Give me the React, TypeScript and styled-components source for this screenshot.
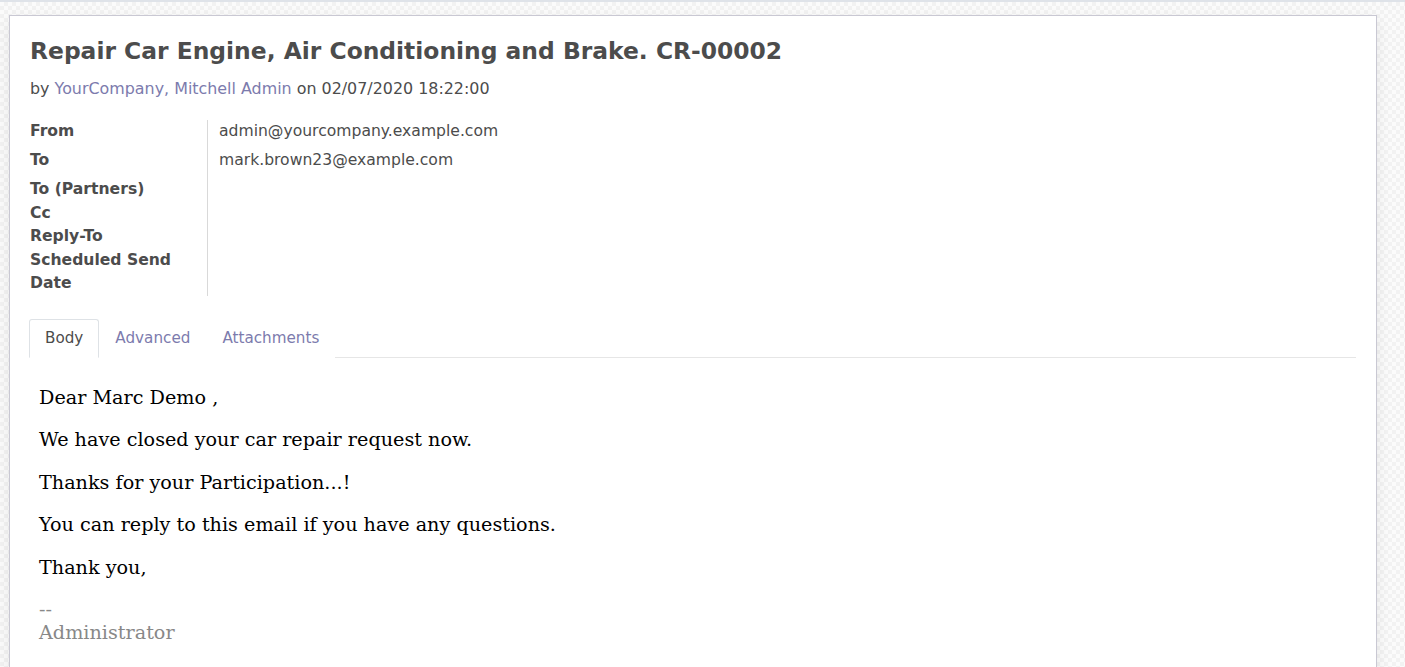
import { createGlobalStyle, styled } from 'styled-components';

const GlobalStyle = createGlobalStyle`
  html, body {
    margin: 0;
    padding: 0;
  }
  body {
    font-family: "DejaVu Sans", Verdana, sans-serif;
    color: #4c4c4c;
    overflow: hidden;
  }
`;

export const Page = styled.div`
  min-height: 667px;
  border-top: 2px solid #dfe3e9;
  background-color: #f7f7f7;
  background-image: repeating-conic-gradient(#f2f2f2 0% 25%, #fbfbfb 0% 50%);
  background-size: 8px 8px;
  padding: 13px 28px 0 9px;
`;

export const Sheet = styled.div`
  background: #ffffff;
  border: 1px solid #c9c8d3;
  box-shadow: 0 5px 14px rgba(0, 0, 0, 0.08);
  padding: 22px 20px 30px 20px;
  min-height: 700px;
`;

export const Title = styled.h1`
  margin: 0;
  font-size: 23.4px;
  line-height: 26px;
  font-weight: 700;
  color: #4c4c4c;
`;

export const Byline = styled.div`
  margin-top: 15px;
  font-size: 15.9px;
  line-height: 20px;
`;

export const Link = styled.a`
  color: #7c7bad;
  text-decoration: none;
`;

export const Fields = styled.div`
  display: grid;
  grid-template-columns: 178px 1fr;
  margin-top: 21px;
`;

export const Label = styled.div<{ $tall?: boolean }>`
  border-right: 1px solid #d9d9d9;
  font-size: 15.6px;
  font-weight: 700;
  line-height: 23.5px;
  min-height: ${(p) => (p.$tall ? '29px' : '0')};
`;

export const Value = styled.div`
  padding-left: 11px;
  font-size: 15.6px;
  line-height: 23.5px;
`;

export const TabBar = styled.div`
  display: flex;
  margin: 23px 0 0 -1px;
  border-bottom: 1px solid #e6e6e6;
`;

export const Tab = styled.div<{ $active?: boolean }>`
  box-sizing: border-box;
  padding: 0 15px;
  height: 39px;
  display: flex;
  align-items: center;
  font-size: 15.2px;
  margin-bottom: -1px;
  color: ${(p) => (p.$active ? '#4c4c4c' : '#7c7bad')};
  background: #ffffff;
  border: 1px solid ${(p) => (p.$active ? '#dee2e6' : 'transparent')};
  border-bottom-color: ${(p) => (p.$active ? '#ffffff' : 'transparent')};
  border-radius: 3px 3px 0 0;
`;

export const Mail = styled.div`
  padding: 28px 9px 0 9px;
  font-family: "DejaVu Serif", "Liberation Serif", serif;
  font-size: 19.2px;
  color: #000000;
`;

export const Para = styled.p`
  margin: 0 0 19.5px 0;
  line-height: 23px;
`;

export const Signature = styled.div`
  color: #888888;
  line-height: 23px;
`;

const fields: { label: string; value?: string; tall?: boolean }[] = [
  { label: 'From', value: 'admin@yourcompany.example.com', tall: true },
  { label: 'To', value: 'mark.brown23@example.com', tall: true },
  { label: 'To (Partners)' },
  { label: 'Cc' },
  { label: 'Reply-To' },
  { label: 'Scheduled Send Date' },
];

export default function App() {
  return (
    <Page>
      <GlobalStyle />
      <Sheet>
        <Title>Repair Car Engine, Air Conditioning and Brake. CR-00002</Title>
        <Byline>
          by <Link>YourCompany, Mitchell Admin</Link> on 02/07/2020 18:22:00
        </Byline>
        <Fields>
          {fields.map((f) => (
            <>
              <Label key={f.label} $tall={f.tall}>
                {f.label}
              </Label>
              <Value key={f.label + '-v'}>{f.value}</Value>
            </>
          ))}
        </Fields>
        <TabBar>
          <Tab $active>Body</Tab>
          <Tab>Advanced</Tab>
          <Tab>Attachments</Tab>
        </TabBar>
        <Mail>
          <Para>Dear Marc Demo ,</Para>
          <Para>We have closed your car repair request now.</Para>
          <Para>Thanks for your Participation...!</Para>
          <Para>You can reply to this email if you have any questions.</Para>
          <Para>Thank you,</Para>
          <Signature>
            --
            <br />
            Administrator
          </Signature>
        </Mail>
      </Sheet>
    </Page>
  );
}
